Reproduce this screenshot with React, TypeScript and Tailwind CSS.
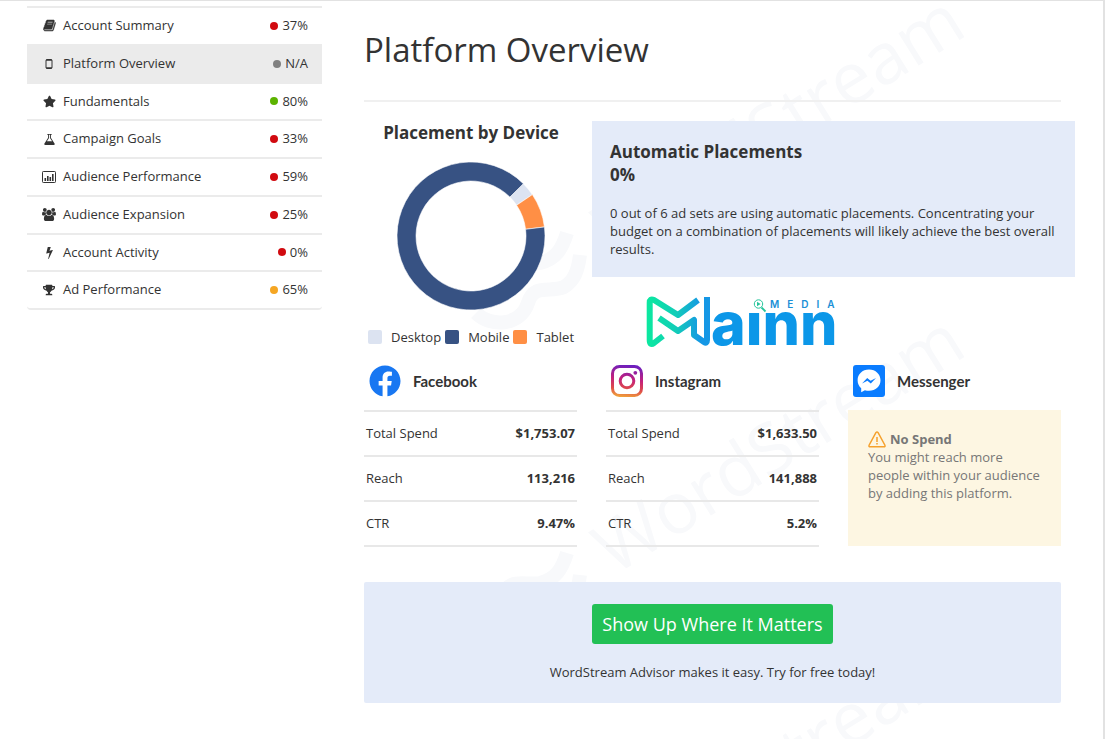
import type { ReactNode } from 'react'
import { FaStar, FaTrophy, FaFacebook } from 'react-icons/fa'

interface NavItem {
  label: string
  score: string
  dot: string
  icon: ReactNode
  active?: boolean
}

interface Metric {
  label: string
  value: string
}

const BookIcon = () => (
  <svg viewBox="0 0 1792 1792" className="size-[13px]" fill="currentColor" stroke="currentColor" strokeWidth="60">
    <path d="M1703 478q40 57 18 129l-275 906q-19 64-76.5 107.5t-122.5 43.5h-923q-77 0-148.5-53.5t-99.5-131.5q-24-67-2-127 0-4 3-27t4-37q1-8-3-21.5t-3-19.5q2-11 8-21t16.5-23.5 16.5-23.5q23-38 45-91.5t30-91.5q3-10 .5-30t-.5-28q3-11 17-28t17-23q21-36 42-92t25-90q1-9-2.5-32t.5-28q4-13 22-30.5t22-22.5q19-26 42.5-84.5t27.5-96.5q1-8-3-25.5t-2-26.5q2-8 9-18t18-23 17-21q8-12 16.5-30.5t15-35 16-36 19.5-32 26.5-23.5 36-11.5 47.5 5.5l-1 3q38-9 51-9h761q74 0 114 56t18 130l-274 906q-36 119-71.5 153.5t-128.5 34.5h-869q-27 0-38 15-11 16-1 43 24 70 144 70h923q29 0 56-15.5t35-41.5l300-987q7-22 5-57 38 15 59 43zm-1064 2q-4 13 2 22.5t20 9.5h608q13 0 25.5-9.5t16.5-22.5l21-64q4-13-2-22.5t-20-9.5h-608q-13 0-25.5 9.5t-16.5 22.5zm-83 256q-4 13 2 22.5t20 9.5h608q13 0 25.5-9.5t16.5-22.5l21-64q4-13-2-22.5t-20-9.5h-608q-13 0-25.5 9.5t-16.5 22.5z" />
  </svg>
)

const PhoneIcon = () => (
  <svg viewBox="0 0 14 14" className="size-[14px]" fill="none" stroke="currentColor">
    <rect x="4" y="2.5" width="6" height="9" rx="1" />
    <path d="M4 3.2h6M4 10.8h6" strokeWidth="1.2" />
  </svg>
)

const FlaskIcon = () => (
  <svg viewBox="0 0 1792 1792" className="size-[13px]" fill="currentColor">
    <path d="M1591 1448q56 89 21.5 152.5t-140.5 63.5h-1152q-106 0-140.5-63.5t21.5-152.5l503-793v-399h-64q-26 0-45-19t-19-45 19-45 45-19h512q26 0 45 19t19 45-19 45-45 19h-64v399zm-779-725l-272 429h712l-272-429-20-31v-436h-128v436z" />
  </svg>
)

const ChartIcon = () => (
  <svg viewBox="0 0 14 12" className="h-[12px] w-[14px]" fill="currentColor">
    <rect x="0.5" y="0.5" width="13" height="11" rx="0.8" fill="none" stroke="currentColor" />
    <path d="M2.5 7h1.6v3H2.5zM5 5h1.6v5H5zM7.5 6h1.6v4H7.5zM10 3h1.6v7H10z" />
  </svg>
)

const GroupIcon = () => (
  <svg viewBox="0 0 1920 1792" className="h-[13px] w-[14px]" fill="currentColor">
    <path d="M593 896q-162 5-265 128h-134q-82 0-138-40.5t-56-118.5q0-353 124-353 6 0 43.5 21t97.5 42.5 119 21.5q67 0 133-23-5 37-5 66 0 139 81 256zm1071 637q0 120-73 189.5t-194 69.5h-874q-121 0-194-69.5t-73-189.5q0-53 3.5-103.5t14-109 26.5-108.5 43-97.5 62-81 85.5-53.5 111.5-20q10 0 43 21.5t73 48 107 48 135 21.5 135-21.5 107-48 73-48 43-21.5q61 0 111.5 20t85.5 53.5 62 81 43 97.5 26.5 108.5 14 109 3.5 103.5zm-1024-1277q0 106-75 181t-181 75-181-75-75-181 75-181 181-75 181 75 75 181zm704 384q0 159-112.5 271.5t-271.5 112.5-271.5-112.5-112.5-271.5 112.5-271.5 271.5-112.5 271.5 112.5 112.5 271.5zm576 225q0 78-56 118.5t-138 40.5h-134q-103-123-265-128 81-117 81-256 0-29-5-66 66 23 133 23 59 0 119-21.5t97.5-42.5 43.5-21q124 0 124 353zm-128-609q0 106-75 181t-181 75-181-75-75-181 75-181 181-75 181 75 75 181z" />
  </svg>
)

const BoltIcon = () => (
  <svg viewBox="0 0 1792 1792" className="size-[13px]" fill="currentColor">
    <path d="M1333 566q18 20 7 44l-540 1157q-13 25-42 25-4 0-14-2-17-5-25.5-19t-4.5-30l197-808-406 101q-4 1-12 1-18 0-31-11-18-15-13-39l201-825q4-14 16-23t28-9h328q19 0 32 12.5t13 29.5q0 8-5 18l-171 463 396-98q8-2 12-2 19 0 34 15z" />
  </svg>
)

const navItems: NavItem[] = [
  { label: 'Account Summary', score: '37%', dot: 'bg-[#d10a10]', icon: <BookIcon /> },
  { label: 'Platform Overview', score: 'N/A', dot: 'bg-[#808080]', icon: <PhoneIcon />, active: true },
  { label: 'Fundamentals', score: '80%', dot: 'bg-[#5cb300]', icon: <FaStar size={13} /> },
  { label: 'Campaign Goals', score: '33%', dot: 'bg-[#d10a10]', icon: <FlaskIcon /> },
  { label: 'Audience Performance', score: '59%', dot: 'bg-[#d10a10]', icon: <ChartIcon /> },
  { label: 'Audience Expansion', score: '25%', dot: 'bg-[#d10a10]', icon: <GroupIcon /> },
  { label: 'Account Activity', score: '0%', dot: 'bg-[#d10a10]', icon: <BoltIcon /> },
  { label: 'Ad Performance', score: '65%', dot: 'bg-[#f5a623]', icon: <FaTrophy size={12} /> },
]

const facebookMetrics: Metric[] = [
  { label: 'Total Spend', value: '$1,753.07' },
  { label: 'Reach', value: '113,216' },
  { label: 'CTR', value: '9.47%' },
]

const instagramMetrics: Metric[] = [
  { label: 'Total Spend', value: '$1,633.50' },
  { label: 'Reach', value: '141,888' },
  { label: 'CTR', value: '5.2%' },
]

const legend = [
  { label: 'Desktop', color: 'bg-[#dce3f1]' },
  { label: 'Mobile', color: 'bg-[#375283]' },
  { label: 'Tablet', color: 'bg-[#ff8f45]' },
]

// angles in degrees, clockwise from 12 o'clock
const slices = [
  { name: 'Desktop', from: 45, to: 56, color: '#dce3f1' },
  { name: 'Tablet', from: 56, to: 83, color: '#ff8f45' },
  { name: 'Mobile', from: 83, to: 405, color: '#375283' },
]

function slicePath(from: number, to: number): string {
  const outer = 74
  const inner = 55
  const point = (r: number, deg: number) => {
    const rad = (deg * Math.PI) / 180
    return `${(74 + r * Math.sin(rad)).toFixed(2)} ${(74 - r * Math.cos(rad)).toFixed(2)}`
  }
  const large = to - from > 180 ? 1 : 0
  return `M${point(outer, from)}A${outer} ${outer} 0 ${large} 1 ${point(outer, to)}L${point(inner, to)}A${inner} ${inner} 0 ${large} 0 ${point(inner, from)}Z`
}

function Donut() {
  return (
    <svg viewBox="0 0 148 148" className="size-[148px]" role="img" aria-label="Placement by device">
      <circle cx="74" cy="74" r="60" fill="#fff" />
      {slices.map((s) => (
        <path key={s.name} d={slicePath(s.from, s.to)} fill={s.color} stroke="#fff" strokeWidth="0.6" />
      ))}
    </svg>
  )
}

function Watermark() {
  return (
    <svg className="absolute top-0 left-0 -z-10 h-full w-full" aria-hidden="true">
      {[-320, 0, 320].map((dy) => (
        <g key={dy} transform={`translate(0 ${dy})`} fill="#f8f9fb">
          <text x="0" y="0" fontSize="71" fontFamily="Open Sans" transform="translate(614 575) rotate(-32)">
            WordStream
          </text>
          <g fill="none" stroke="#f8f9fb" strokeWidth="14">
            <path d="M502 597C508 575 525 585 540 582C556 578 562 568 567 552" />
            <path d="M476 632C490 646 520 646 528 622C534 602 550 612 564 606C574 600 578 590 580 574" />
          </g>
        </g>
      ))}
    </svg>
  )
}

function Sidebar() {
  return (
    <nav className="mt-[5px] w-[295px] shrink-0">
      <ul className="grid h-[304px] grid-rows-8 rounded-b border-t-2 border-[#ebebeb]">
        {navItems.map((item) => (
          <li key={item.label} className="border-b-2 border-[#ebebeb] last:rounded-b">
            <a
              href="#"
              className={`flex h-full items-center px-3.5 text-[13px] ${item.active ? 'bg-[#ebebeb]' : ''}`}
            >
              <span className="mr-1.5 flex w-4 justify-center">{item.icon}</span>
              <span>{item.label}</span>
              <span className={`mr-1 ml-auto size-2 rounded-full ${item.dot}`} />
              <span>{item.score}</span>
            </a>
          </li>
        ))}
      </ul>
    </nav>
  )
}

function MainnLogo() {
  return (
    <svg viewBox="0 0 200 62" className="mt-[13px] ml-12 h-[62px] w-[200px]" role="img" aria-label="Mainn Media">
      <defs>
        <linearGradient id="mainn" gradientUnits="userSpaceOnUse" x1="8" y1="0" x2="70" y2="0">
          <stop offset="0" stopColor="#0be8a0" />
          <stop offset="0.45" stopColor="#12cdb8" />
          <stop offset="0.85" stopColor="#1597e5" />
        </linearGradient>
      </defs>
      <g fill="none" stroke="url(#mainn)" strokeWidth="6" strokeLinejoin="round">
        <path d="M58 10L38 25L14 10Q9.7 8 9.7 13V50Q9.7 56 14 53L23 46" />
        <path d="M19 28L38 41L54 30V45L64 52Q67 54 67 50V7" />
      </g>
      <text x="71" y="55" fontFamily="Inter" fontWeight="800" fontSize="59" fill="#0c97e8">
        aınn
      </text>
      <g fill="none" stroke="#25c59b" strokeWidth="1">
        <circle cx="118.5" cy="14" r="4.2" />
        <path d="M121.5 17.5l4 4" strokeWidth="1.8" />
        <path d="M117 11.8v4.4l3.6-2.2z" fill="#25c59b" stroke="none" />
      </g>
      <text x="130" y="18" fontFamily="Inter" fontWeight="600" fontSize="10" fill="#1a8fd6" className="tracking-[8px]">
        MEDIA
      </text>
    </svg>
  )
}

const InstagramIcon = () => (
  <svg viewBox="0 0 32 32" className="size-8" fill="none" stroke="url(#insta)" strokeWidth="3">
    <defs>
      <linearGradient id="insta" gradientUnits="userSpaceOnUse" x1="18" y1="0" x2="14" y2="32">
        <stop offset="0" stopColor="#6a1fc0" />
        <stop offset="0.45" stopColor="#c4217c" />
        <stop offset="0.75" stopColor="#dd4a4a" />
        <stop offset="1" stopColor="#f0a03c" />
      </linearGradient>
    </defs>
    <rect x="1.5" y="1.5" width="29" height="29" rx="7" />
    <circle cx="16" cy="16" r="6.8" />
    <circle cx="24.3" cy="7.8" r="1.9" fill="url(#insta)" stroke="none" />
  </svg>
)

const MessengerIcon = () => (
  <svg viewBox="0 0 32 32" className="size-8">
    <rect width="32" height="32" rx="3" fill="#0a7cff" />
    <path
      fill="#fff"
      d="M16 4.5C9.3 4.5 4.6 9.3 4.6 15.3c0 3.3 1.4 6.1 3.6 8v4l3.7-2.1c1.3.4 2.7.6 4.1.6 6.7 0 11.5-4.6 11.5-10.5S22.7 4.500 16 4.500z"
    />
    <path fill="#0a7cff" d="M9 18.5l5.2-5.600 3.4 2.800 5.4-2.800-5.2 5.600-3.4-2.800z" />
  </svg>
)

const WarningIcon = () => (
  <svg viewBox="0 0 18 17" className="h-[17px] w-[18px]" fill="none" stroke="#f5a12d" strokeWidth="1.5">
    <path d="M7.9 1.7L1.2 14q-.8 1.8 1 1.8h13.6q1.8 0 1-1.8L10.1 1.7q-1.1-1.6-2.2 0z" />
    <path d="M9 6v5M9 12v1.5" />
  </svg>
)

function PlatformHeader({ icon, name }: { icon: ReactNode; name: string }) {
  return (
    <div className="flex h-[45px] items-start gap-3 pl-[5px]">
      {icon}
      <h3 className="font-[Lato,sans-serif] text-[15px] leading-8 font-bold">{name}</h3>
    </div>
  )
}

function MetricTable({ name, metrics }: { name: string; metrics: Metric[] }) {
  return (
    <table className="w-full border-b-2 border-[#e8e8e8] text-[13px]" aria-label={name}>
      <tbody>
        {metrics.map((m) => (
          <tr key={m.label} className="h-[45px] border-t-2 border-[#e8e8e8]">
            <th scope="row" className="pl-0.5 text-left font-normal">{m.label}</th>
            <td className="pr-0.5 text-right font-bold">{m.value}</td>
          </tr>
        ))}
      </tbody>
    </table>
  )
}

export default function App() {
  return (
    <div className="relative isolate flex min-h-screen gap-[42px] overflow-hidden border-t border-r-2 border-[#e2e2e2] bg-white pl-[27px] font-['Open_Sans',sans-serif] text-[#333]">
      <Watermark />
      <Sidebar />
      <main className="min-w-0 flex-1 pr-[42px]">
        <h1 className="border-b-2 border-[#f0f0f0] pt-[25px] pb-[26px] text-[33px] leading-[48px]">Platform Overview</h1>

        <section className="mt-[19px] flex gap-3.5">
          <div className="flex w-[214px] shrink-0 flex-col items-center">
            <h2 className="text-[17px] leading-[23px] font-bold">Placement by Device</h2>
            <div className="mt-[18px]">
              <Donut />
            </div>
            <ul className="mt-[17px] flex gap-1 text-[13px] leading-5">
              {legend.map((l) => (
                <li key={l.label} className="flex items-center gap-[9px]">
                  <span className={`size-3.5 rounded-xs ${l.color}`} />
                  {l.label}
                </li>
              ))}
            </ul>
          </div>
          <div className="-mr-3.5 flex-1">
            <div className="bg-[#e4ebf9] px-[18px] pt-[19px] pb-[19px]">
              <h2 className="text-[17px] leading-[23px] font-bold">
                Automatic Placements
                <br />
                0%
              </h2>
              <p className="mt-[18px] text-[13px] leading-[18px]">
                0 out of 6 ad sets are using automatic placements. Concentrating your budget on a combination of
                placements will likely achieve the best overall results.
              </p>
            </div>
            <MainnLogo />
          </div>
        </section>

        <section className="mt-[13px] grid grid-cols-3 gap-[29px]">
          <div>
            <PlatformHeader icon={<FaFacebook size={32} color="#1877f2" />} name="Facebook" />
            <MetricTable name="Facebook" metrics={facebookMetrics} />
          </div>
          <div>
            <PlatformHeader icon={<InstagramIcon />} name="Instagram" />
            <MetricTable name="Instagram" metrics={instagramMetrics} />
          </div>
          <div>
            <PlatformHeader icon={<MessengerIcon />} name="Messenger" />
            <div className="h-[136px] bg-[#fdf6e2] px-5 pt-5 text-[13px] leading-[18px] text-[#777]">
              <p className="flex items-center gap-1 font-bold">
                <WarningIcon />
                No Spend
              </p>
              <p>You might reach more people within your audience by adding this platform.</p>
            </div>
          </div>
        </section>

        <section className="mt-[35px] flex flex-col items-center rounded-xs bg-[#e4ebf9] pt-[22px] pb-[21px]">
          <button type="button" className="h-10 rounded-[3px] bg-[#22c055] px-2.5 text-lg text-white">
            Show Up Where It Matters
          </button>
          <p className="mt-[18px] text-[13px] leading-5">WordStream Advisor makes it easy. Try for free today!</p>
        </section>
      </main>
    </div>
  )
}
